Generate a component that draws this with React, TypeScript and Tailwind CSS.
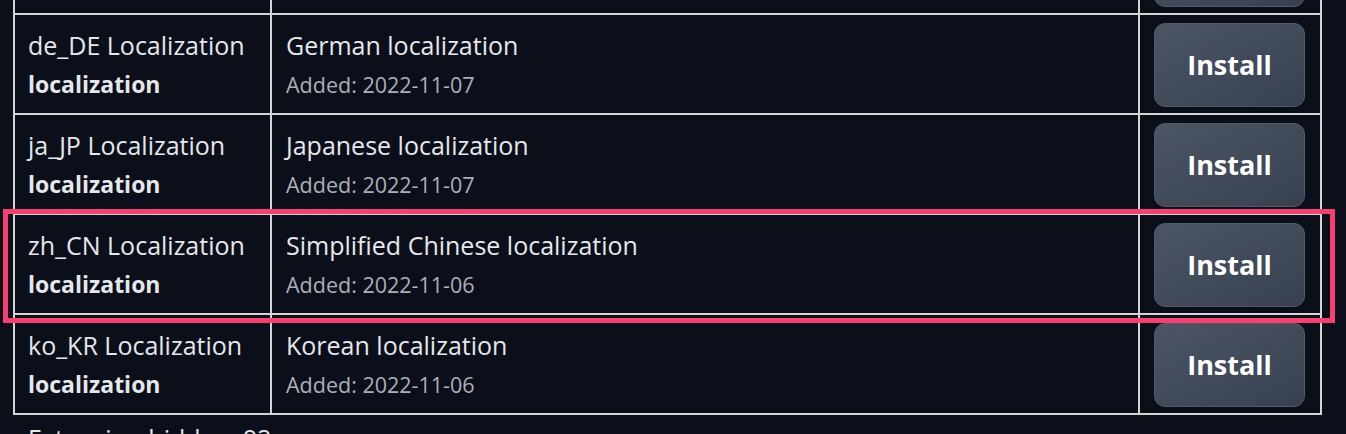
import React from "react";

type Row = { name: string; desc: string; added: string };

const rows: Row[] = [
  { name: "fr_FR Localization", desc: "French localization", added: "2022-11-07" },
  { name: "de_DE Localization", desc: "German localization", added: "2022-11-07" },
  { name: "ja_JP Localization", desc: "Japanese localization", added: "2022-11-07" },
  { name: "zh_CN Localization", desc: "Simplified Chinese localization", added: "2022-11-06" },
  { name: "ko_KR Localization", desc: "Korean localization", added: "2022-11-06" },
];

const font = { fontFamily: "'Open Sans', 'Noto Sans', sans-serif" };

export default function App() {
  return (
    <div className="w-[1346px] h-[434px] overflow-hidden bg-[#0b0f19] text-[#e5e7eb]" style={font}>
      <div className="relative ml-[13px] mt-[-87px] w-[1309px]">
        <div className="grid grid-cols-[257px_868px_182px] border-l-2 border-t-2 border-[#d4d4d4]">
          {rows.map((r) => (
            <React.Fragment key={r.name}>
              <div className="h-[100px] border-r-2 border-b-2 border-[#d4d4d4] pl-[13px] pt-[12px]">
                <div className="text-[25px] leading-[36px] text-[#e5e7eb]">{r.name}</div>
                <div className="mt-[3px] text-[23px] leading-[36px] font-bold text-[#e5e7eb]">localization</div>
              </div>
              <div className="h-[100px] border-r-2 border-b-2 border-[#d4d4d4] pl-[14px] pt-[12px]">
                <div className="text-[25px] leading-[36px] text-[#e5e7eb]">{r.desc}</div>
                <div className="mt-[6px] text-[21.5px] leading-[32px] text-[#abafb7]">Added: {r.added}</div>
              </div>
              <div className="h-[100px] border-r-2 border-b-2 border-[#d4d4d4] pl-[14px] pt-[8px]">
                <button className="h-[84px] w-[151px] rounded-[11px] border border-[#525a67] bg-gradient-to-br from-[#4b5563] to-[#374151] text-[27px] font-bold text-white">
                  Install
                </button>
              </div>
            </React.Fragment>
          ))}
        </div>
        <div className="pointer-events-none absolute left-[-10px] top-[296px] h-[114px] w-[1332px] border-[5px] border-[#f7406f]" />
        <div className="pl-[15px] pt-[5px] text-[25px] leading-[36px] text-[#e5e7eb]">Extension hidden: 92</div>
      </div>
    </div>
  );
}
